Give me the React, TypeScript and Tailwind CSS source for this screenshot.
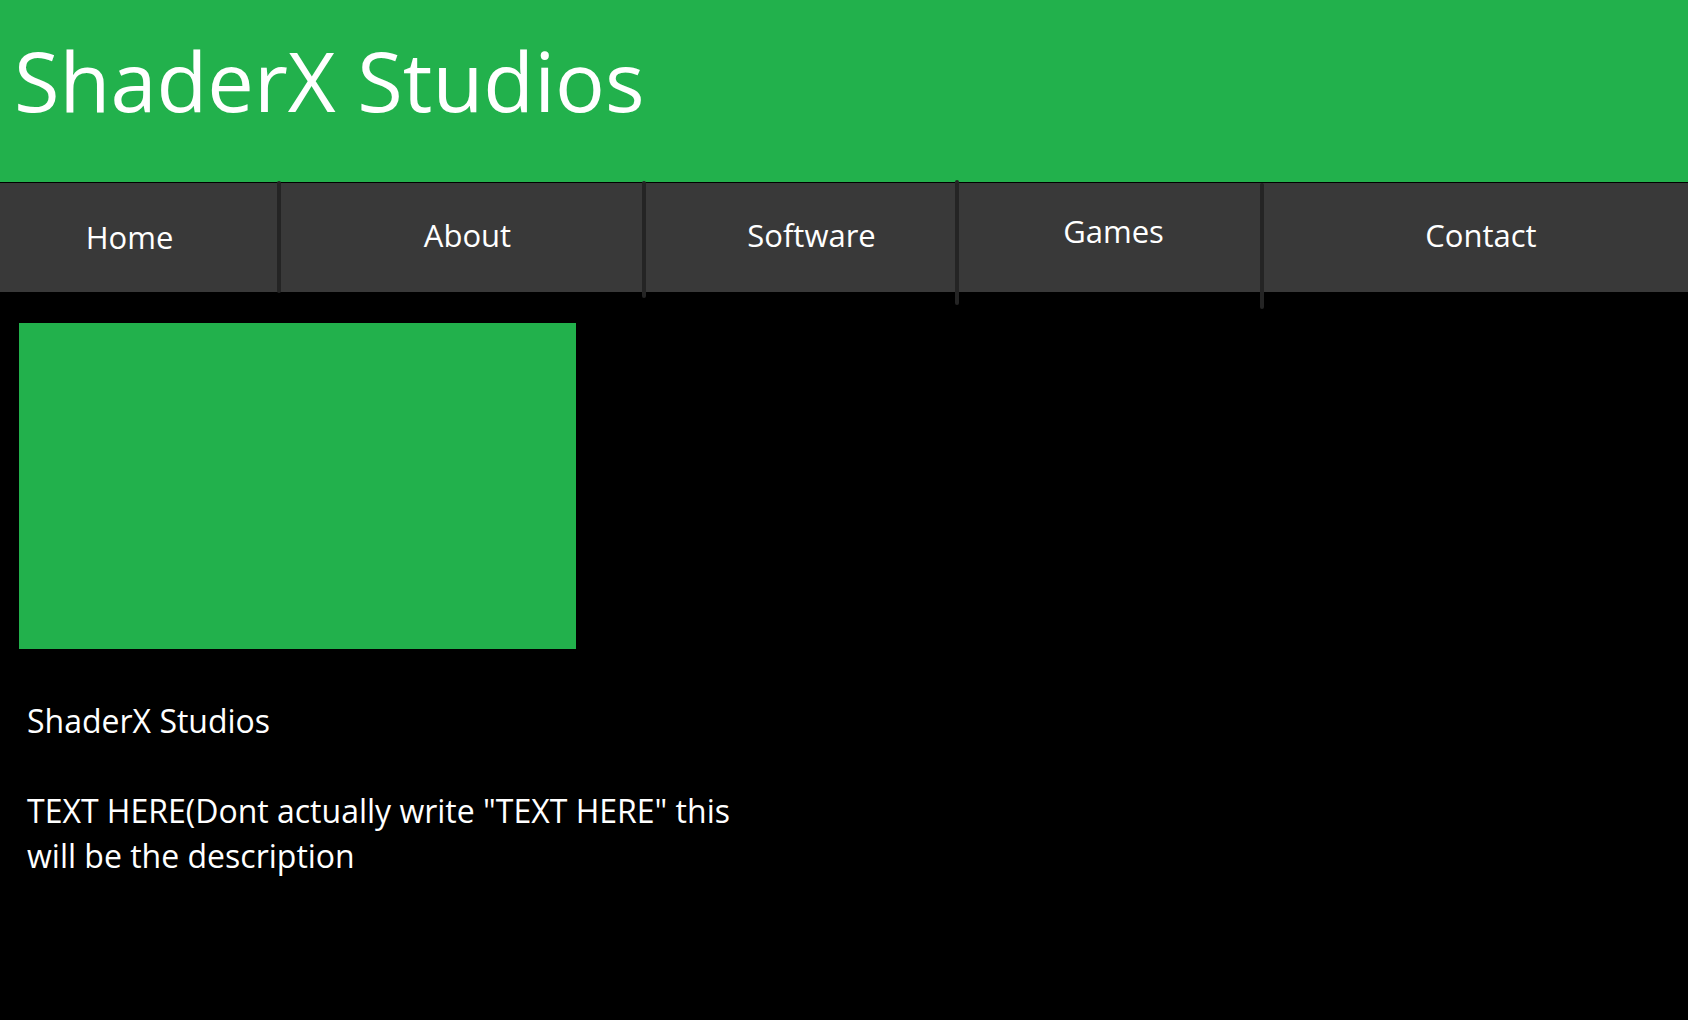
import React from 'react';

const navItems = [
  { label: 'Home', box: 'w-[277px] pt-[32px] pr-[18px]' },
  { label: 'About', box: 'w-[361px] pt-[30px] pl-[12px]' },
  { label: 'Software', box: 'w-[309px] pt-[30px] pl-[22px]' },
  { label: 'Games', box: 'w-[301px] pt-[26px] pl-[8px]' },
  { label: 'Contact', box: 'flex-1 pt-[30px] pl-[10px]' },
];

// hand-drawn separators, each a little different
const dividers = ['-mt-[2px] h-[112px]', '-mt-[2px] h-[117px]', '-mt-[3px] h-[125px]', 'mt-0 h-[126px]'];

export default function App() {
  return (
    <div className="min-h-screen bg-black text-white font-['Open_Sans',_'Noto_Sans',_sans-serif]">
      {/* Header */}
      <header className="h-[182px] bg-[#22b14c] pl-[14px] pt-[38px]">
        <h1 className="text-[83px] leading-none font-normal">ShaderX Studios</h1>
      </header>

      {/* Nav */}
      <nav className="flex h-[110px] border-t border-black bg-[#393939]">
        {navItems.map((item, i) => (
          <React.Fragment key={item.label}>
            <div className={`flex justify-center ${item.box}`}>
              <span className="text-[31px] leading-[45px]">{item.label}</span>
            </div>
            {i < dividers.length && (
              <div className={`w-[4px] shrink-0 self-start rounded-full bg-[#242424] ${dividers[i]}`} />
            )}
          </React.Fragment>
        ))}
      </nav>

      {/* Content */}
      <main className="pt-[31px]">
        <div className="ml-[19px] h-[326px] w-[557px] bg-[#22b14c]" />
        <div className="mt-[49px] w-[772px] pl-[27px] text-[32px] leading-[45px]">
          <p>ShaderX Studios</p>
          <br />
          <p>TEXT HERE(Dont actually write "TEXT HERE" this will be the description</p>
        </div>
      </main>
    </div>
  );
}
